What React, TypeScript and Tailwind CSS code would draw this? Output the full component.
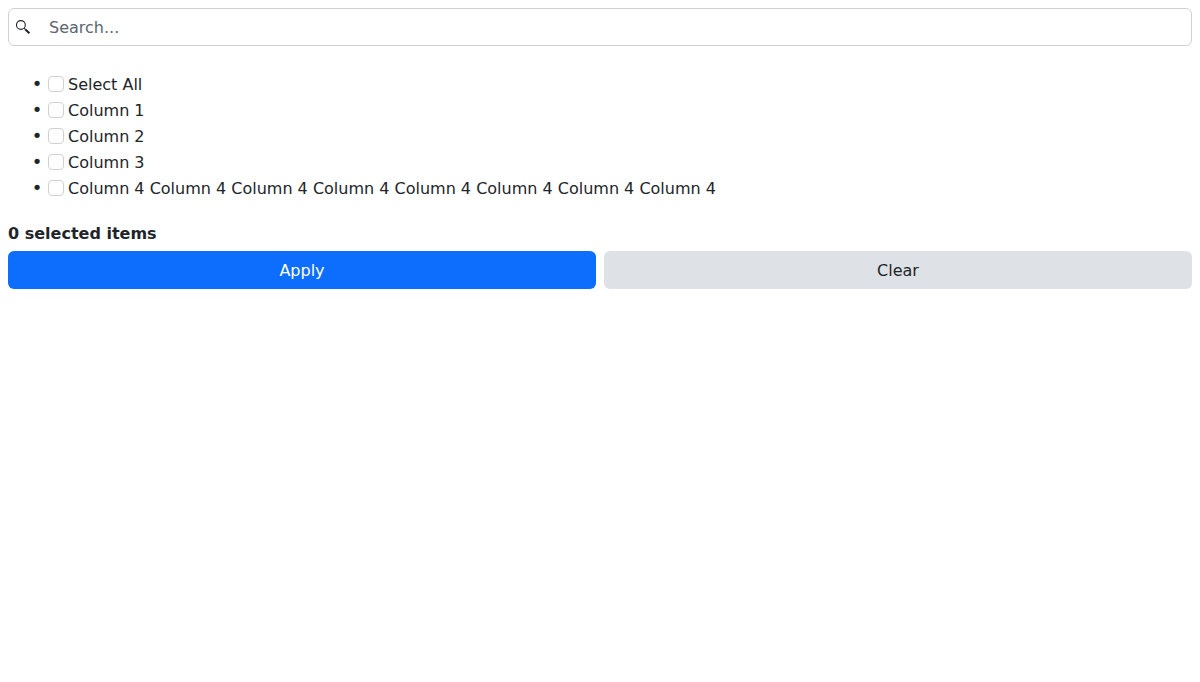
import { useState } from "react";

const columns = [
  "Column 1",
  "Column 2",
  "Column 3",
  "Column 4 Column 4 Column 4 Column 4 Column 4 Column 4 Column 4 Column 4",
];

type OptionProps = { label: string; checked: boolean; onChange: () => void };

function Option({ label, checked, onChange }: OptionProps) {
  return (
    <li className="leading-[25px] marker:text-[18px] marker:content-['•_']">
      <label className="inline-flex items-start gap-1 align-top">
        <input
          type="checkbox"
          checked={checked}
          onChange={onChange}
          className="mt-1 size-4 shrink-0 appearance-none rounded border border-[#d0d1d2] bg-white checked:border-[#0d6efd] checked:bg-[#0d6efd]"
        />
        {label}
      </label>
    </li>
  );
}

export default function App() {
  const [query, setQuery] = useState("");
  const [selected, setSelected] = useState<string[]>([]);

  const visible = columns.filter((c) => c.toLowerCase().includes(query.toLowerCase()));
  const allSelected = selected.length === columns.length;

  const toggle = (name: string) =>
    setSelected((prev) => (prev.includes(name) ? prev.filter((c) => c !== name) : [...prev, name]));

  return (
    <div className="p-2 font-['DejaVu_Sans',sans-serif] text-base text-[#212529]">
      <div className="relative">
        <svg
          className="pointer-events-none absolute top-3 left-2 size-4"
          viewBox="0 0 16 16"
          fill="none"
          stroke="currentColor"
          aria-hidden="true"
        >
          <circle cx="4.9" cy="5" r="4.4" strokeWidth="1.1" />
          <path d="M8.2 8.2 9.6 9.6" strokeWidth="1.2" />
          <path d="M9.4 9.4 13.4 13.2" strokeWidth="2.1" />
        </svg>
        <input
          type="text"
          aria-label="Search"
          placeholder="Search..."
          value={query}
          onChange={(e) => setQuery(e.target.value)}
          className="block w-full rounded-md border border-[#d0d1d2] bg-white pt-[7px] pr-3 pb-[5px] pl-10 leading-6 placeholder:text-[#5c6570]"
        />
      </div>

      <ul className="mt-[25px] mb-[21px] list-disc pl-10">
        <Option
          label="Select All"
          checked={allSelected}
          onChange={() => setSelected(allSelected ? [] : columns)}
        />
        {visible.map((name) => (
          <Option
            key={name}
            label={name}
            checked={selected.includes(name)}
            onChange={() => toggle(name)}
          />
        ))}
      </ul>

      <p className="mb-[5px] leading-6 font-bold">{selected.length} selected items</p>
      <div className="flex gap-2">
        <button
          type="button"
          className="flex-1 rounded-md bg-[#0d6efd] px-3 pt-2 pb-1.5 leading-6 text-white"
        >
          Apply
        </button>
        <button
          type="button"
          onClick={() => setSelected([])}
          className="flex-1 rounded-md bg-[#dee2e6] px-3 pt-2 pb-1.5 leading-6"
        >
          Clear
        </button>
      </div>
    </div>
  );
}
